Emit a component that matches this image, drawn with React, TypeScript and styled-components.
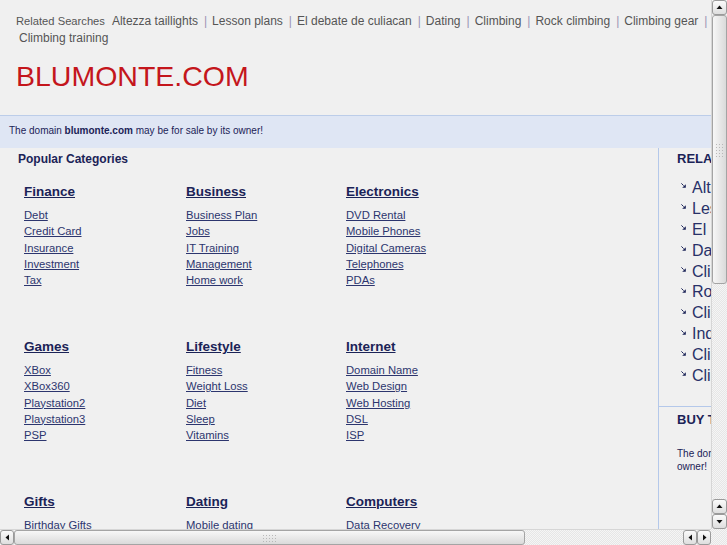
import styled, { createGlobalStyle } from 'styled-components';

const GlobalStyle = createGlobalStyle`
  html, body {
    margin: 0;
    padding: 0;
    overflow: hidden;
    background: #f0f0f0;
  }
  body {
    font-family: "Liberation Sans", Arial, sans-serif;
  }
`;

const Frame = styled.div`
  display: grid;
  grid-template-columns: 711px 16px;
  grid-template-rows: 529px 16px;
  width: 727px;
  height: 545px;
  background: #f0f0f0;
`;

const Viewport = styled.div`
  overflow: hidden;
`;

const Page = styled.div`
  width: 980px;
`;

const Searches = styled.div`
  display: flex;
  flex-wrap: wrap;
  align-items: baseline;
  padding: 13px 16px 0;
  line-height: 17px;
  color: #555;
`;

const SearchLabel = styled.span`
  font-size: 11.2px;
  margin-right: 4px;
`;

const SearchItem = styled.span`
  font-size: 12px;
  white-space: nowrap;
`;

const SearchLink = styled.a`
  color: #555;
  text-decoration: none;
  padding: 0 3px;
`;

const Sep = styled.span`
  color: #9a94b4;
  margin: 0 2px 0 3px;
`;

const Title = styled.h1`
  margin: 13px 0 0;
  padding: 0 16px;
  height: 55px;
  font-size: 28.5px;
  line-height: 33px;
  font-weight: normal;
  color: #c4161c;
`;

const SaleBar = styled.div`
  height: 32px;
  border-top: 1px solid #bccde9;
  background: #dfe6f4;
  padding-left: 9px;
  font-size: 10px;
  line-height: 30px;
  color: #1b2357;

  b {
    font-weight: bold;
  }
`;

const Body = styled.div`
  display: flex;
  min-height: 420px;
`;

const Main = styled.div`
  width: 658px;
  border-right: 1px solid #b4c8ea;
  padding-top: 4px;
`;

const SectionTitle = styled.div`
  padding-left: 18px;
  font-size: 12px;
  font-weight: bold;
  line-height: 14px;
  color: #1b2357;
`;

const Grid = styled.div`
  display: grid;
  grid-template-columns: 162px 160px 160px;
  grid-auto-rows: 155px;
  padding-left: 24px;
  margin-top: 18px;
`;

const Category = styled.div`
  display: flex;
  flex-direction: column;
  align-items: flex-start;
`;

const CatHeading = styled.a`
  font-size: 13.5px;
  font-weight: bold;
  line-height: 16px;
  color: #1b2357;
  text-decoration: underline;
  margin-bottom: 7px;
`;

const CatLink = styled.a`
  font-size: 11.25px;
  line-height: 16.25px;
  color: #2c356e;
  text-decoration: underline;
`;

const Side = styled.div`
  flex: 1;
`;

const SideSection = styled.div<{ $divider?: boolean }>`
  padding: ${(p) => (p.$divider ? '5px' : '3px')} 18px 0;
  border-top: ${(p) => (p.$divider ? '1px solid #b4c8ea' : 'none')};
`;

const SideHeading = styled.div`
  font-size: 13px;
  font-weight: bold;
  line-height: 16px;
  color: #1b2357;
`;

const RelatedList = styled.ul`
  list-style: none;
  margin: 10.5px 0 20px;
  padding: 0;
`;

const RelatedItem = styled.li`
  display: flex;
  align-items: center;
  height: 20.9px;
  font-size: 16px;
  color: #283068;

  svg {
    margin: -4px 6px 0 4px;
    flex-shrink: 0;
  }
`;

const SideText = styled.p`
  margin: 19px 0 0;
  width: 230px;
  font-size: 10px;
  line-height: 13px;
  color: #1b2357;
`;

const VScroll = styled.div`
  display: flex;
  flex-direction: column;
  background: repeating-conic-gradient(#e6e6e6 0 25%, #f5f5f5 0 50%) 0 0 / 2px 2px;
  border-left: 1px solid #d6d6d6;
`;

const HScroll = styled.div`
  display: flex;
  background: repeating-conic-gradient(#e6e6e6 0 25%, #f5f5f5 0 50%) 0 0 / 2px 2px;
  border-top: 1px solid #d6d6d6;
`;

const Corner = styled.div`
  background: repeating-conic-gradient(#e6e6e6 0 25%, #f5f5f5 0 50%) 0 0 / 2px 2px;
`;

const ArrowButton = styled.div<{ $horizontal?: boolean }>`
  display: flex;
  align-items: center;
  justify-content: center;
  box-sizing: border-box;
  width: ${(p) => (p.$horizontal ? '14px' : '15px')};
  height: 15px;
  border: 1px solid #9a9a9a;
  border-radius: 3px;
  background: linear-gradient(#fbfbfb, #dedede);
  flex-shrink: 0;
`;

const Thumb = styled.div<{ $horizontal?: boolean }>`
  display: flex;
  align-items: center;
  justify-content: center;
  box-sizing: border-box;
  border: 1px solid #a4a4a4;
  border-radius: 3px;
  background: ${(p) =>
    p.$horizontal
      ? 'linear-gradient(#f7f7f7, #dadada)'
      : 'linear-gradient(90deg, #f7f7f7, #dadada)'};
  ${(p) => (p.$horizontal ? 'width: 511px; height: 15px;' : 'height: 269px; width: 15px;')}
`;

const Spacer = styled.div`
  flex: 1;
`;

const Grip = styled.div<{ $horizontal?: boolean }>`
  width: ${(p) => (p.$horizontal ? '16px' : '10px')};
  height: ${(p) => (p.$horizontal ? '8px' : '14px')};
  background: radial-gradient(circle, #b8b8b8 0.6px, transparent 0.9px) 0 0 / 3px 3px;
`;

type Dir = 'up' | 'down' | 'left' | 'right';

function Arrow({ dir }: { dir: Dir }) {
  const pts: Record<Dir, string> = {
    up: '0.5,5 3.5,1.5 6.5,5',
    down: '0.5,2 3.5,5.5 6.5,2',
    left: '5,0.5 1.5,3.5 5,6.5',
    right: '2,0.5 5.5,3.5 2,6.5',
  };
  return (
    <svg width="7" height="7" viewBox="0 0 7 7">
      <polygon points={pts[dir]} fill="#111" />
    </svg>
  );
}

function Bullet() {
  return (
    <svg width="5" height="5" viewBox="0 0 5 5">
      <path d="M0.4 0.4 L2.6 2.6" stroke="#1b2357" strokeWidth="1" />
      <polygon points="4.8,1.2 4.8,4.8 1.2,4.8" fill="#1b2357" />
    </svg>
  );
}

const searches = [
  'Altezza taillights',
  'Lesson plans',
  'El debate de culiacan',
  'Dating',
  'Climbing',
  'Rock climbing',
  'Climbing gear',
  'Indoor climbing',
  'Climbing walls',
  'Climbing training',
];

const categories = [
  { name: 'Finance', links: ['Debt', 'Credit Card', 'Insurance', 'Investment', 'Tax'] },
  { name: 'Business', links: ['Business Plan', 'Jobs', 'IT Training', 'Management', 'Home work'] },
  { name: 'Electronics', links: ['DVD Rental', 'Mobile Phones', 'Digital Cameras', 'Telephones', 'PDAs'] },
  { name: 'Games', links: ['XBox', 'XBox360', 'Playstation2', 'Playstation3', 'PSP'] },
  { name: 'Lifestyle', links: ['Fitness', 'Weight Loss', 'Diet', 'Sleep', 'Vitamins'] },
  { name: 'Internet', links: ['Domain Name', 'Web Design', 'Web Hosting', 'DSL', 'ISP'] },
  { name: 'Gifts', links: ['Birthday Gifts', 'Flowers', 'Gift Ideas', 'Wedding Gifts', 'Gift Baskets'] },
  { name: 'Dating', links: ['Mobile dating', 'Online Dating', 'Singles', 'Personals', 'Speed Dating'] },
  { name: 'Computers', links: ['Data Recovery', 'Laptops', 'Software', 'Printers', 'Notebooks'] },
];

export default function App() {
  return (
    <>
      <GlobalStyle />
      <Frame>
        <Viewport>
          <Page>
            <Searches>
              <SearchLabel>Related Searches</SearchLabel>
              {searches.map((s, i) => (
                <SearchItem key={s}>
                  <SearchLink href="#">{s}</SearchLink>
                  {i < searches.length - 1 && <Sep>|</Sep>}
                </SearchItem>
              ))}
            </Searches>
            <Title>BLUMONTE.COM</Title>
            <SaleBar>
              The domain <b>blumonte.com</b> may be for sale by its owner!
            </SaleBar>
            <Body>
              <Main>
                <SectionTitle>Popular Categories</SectionTitle>
                <Grid>
                  {categories.map((c) => (
                    <Category key={c.name}>
                      <CatHeading href="#">{c.name}</CatHeading>
                      {c.links.map((l) => (
                        <CatLink key={l} href="#">{l}</CatLink>
                      ))}
                    </Category>
                  ))}
                </Grid>
              </Main>
              <Side>
                <SideSection>
                  <SideHeading>RELATED SEARCHES</SideHeading>
                  <RelatedList>
                    {searches.map((s) => (
                      <RelatedItem key={s}>
                        <Bullet />
                        {s}
                      </RelatedItem>
                    ))}
                  </RelatedList>
                </SideSection>
                <SideSection $divider>
                  <SideHeading>BUY THIS DOMAIN</SideHeading>
                  <SideText>
                    The domain blumonte.com may be for sale by its owner!
                  </SideText>
                </SideSection>
              </Side>
            </Body>
          </Page>
        </Viewport>
        <VScroll>
          <ArrowButton><Arrow dir="up" /></ArrowButton>
          <Thumb><Grip /></Thumb>
          <Spacer />
          <ArrowButton><Arrow dir="up" /></ArrowButton>
          <ArrowButton><Arrow dir="down" /></ArrowButton>
        </VScroll>
        <HScroll>
          <ArrowButton $horizontal><Arrow dir="left" /></ArrowButton>
          <Thumb $horizontal><Grip $horizontal /></Thumb>
          <Spacer />
          <ArrowButton $horizontal><Arrow dir="left" /></ArrowButton>
          <ArrowButton $horizontal><Arrow dir="right" /></ArrowButton>
        </HScroll>
        <Corner />
      </Frame>
    </>
  );
}
